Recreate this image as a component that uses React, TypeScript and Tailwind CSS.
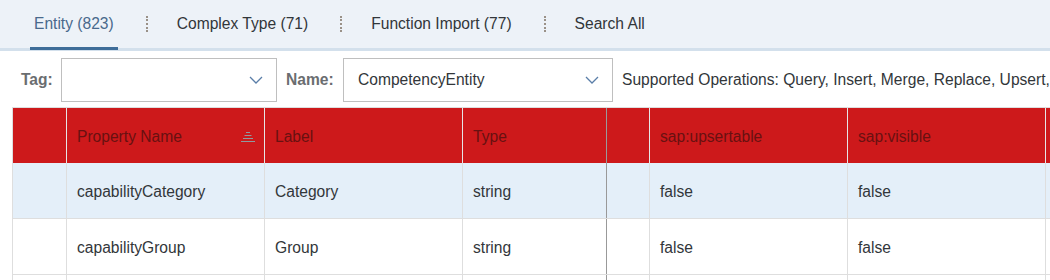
import React from "react";

const tabs = [
  { label: "Entity (823)", active: true },
  { label: "Complex Type (71)", active: false },
  { label: "Function Import (77)", active: false },
  { label: "Search All", active: false },
];

const columns = [
  { key: "sel", title: "", width: "w-[54px]" },
  { key: "name", title: "Property Name", width: "w-[198px]", sort: true },
  { key: "label", title: "Label", width: "w-[198px]" },
  { key: "type", title: "Type", width: "w-[144px]", dark: true },
  { key: "gap", title: "", width: "w-[43px]" },
  { key: "upsert", title: "sap:upsertable", width: "w-[198px]" },
  { key: "visible", title: "sap:visible", width: "w-[198px]" },
  { key: "more", title: "", width: "w-[120px]" },
];

const rows = [
  { sel: "", name: "capabilityCategory", label: "Category", type: "string", gap: "", upsert: "false", visible: "false", more: "" },
  { sel: "", name: "capabilityGroup", label: "Group", type: "string", gap: "", upsert: "false", visible: "false", more: "" },
  { sel: "", name: "", label: "", type: "", gap: "", upsert: "", visible: "", more: "" },
];

const Chevron = () => (
  <svg width="14" height="8" viewBox="0 0 14 8" className="shrink-0">
    <path d="M1 1 L7 7 L13 1" fill="none" stroke="#5a7ea8" strokeWidth="1.3" />
  </svg>
);

const SortIcon = () => (
  <svg width="16" height="12" viewBox="0 0 16 12">
    <rect x="6" y="1" width="4" height="1" fill="#8e9aa0" />
    <rect x="4.5" y="4" width="7" height="1" fill="#8e9aa0" />
    <rect x="3" y="7" width="10" height="1" fill="#8e9aa0" />
    <rect x="1" y="10" width="14" height="1" fill="#8e9aa0" />
  </svg>
);

const Select = ({ value, width }: { value: string; width: string }) => (
  <div className={`flex items-center justify-between h-[44px] ${width} shrink-0 border border-[#bfbfbf] bg-white pl-[14px] pr-[13px]`}>
    <span className="text-[15.6px] text-[#32363a]">{value}</span>
    <Chevron />
  </div>
);

const App = () => {
  return (
    <div className="w-[1050px] h-[280px] overflow-hidden bg-white" style={{ fontFamily: '"Liberation Sans", Arial, sans-serif' }}>
      {/* tab bar */}
      <div className="h-[51px] bg-[#edf2f8] border-b-[3px] border-[#d3e0ec] flex items-stretch pl-[30px]">
        {tabs.map((t, i) => (
          <div key={t.label} className="flex items-center">
            <div
              className={`h-full flex items-center px-[4px] -mb-[3px] border-b-[3px] ${
                t.active ? "border-[#3e6d99] text-[#49698c]" : "border-transparent text-[#32363a]"
              } text-[15.6px]`}
            >
              {t.label}
            </div>
            {i < tabs.length - 1 && (
              <div className="ml-[28px] mr-[25px] h-[16px] border-l-2 border-dotted border-[#9a9188]" />
            )}
          </div>
        ))}
      </div>

      {/* filter bar */}
      <div className="flex items-center h-[56px] pl-[21px] pt-[1px] whitespace-nowrap">
        <span className="w-[40px] shrink-0 text-[15.6px] font-bold text-[#6a6d70]">Tag:</span>
        <Select value="" width="w-[216px]" />
        <span className="ml-[9px] w-[57px] shrink-0 text-[15.6px] font-bold text-[#6a6d70]">Name:</span>
        <Select value="CompetencyEntity" width="w-[270px]" />
        <span className="text-[15.6px] text-[#32363a] ml-[9px]">
          Supported Operations: Query, Insert, Merge, Replace, Upsert,
        </span>
      </div>

      {/* table */}
      <div className="ml-[12px] border-l border-t border-[#dedede] w-max">
        <div className="flex h-[55px] bg-[#cd191b]">
          {columns.map((c) => (
            <div
              key={c.key}
              className={`${c.width} shrink-0 h-full border-r ${c.dark ? "border-[#9a9a9a]" : "border-[#e6e6e6]"} flex items-center justify-between pl-[10px] pr-[8px] pt-[2px] text-[15.6px] text-[#681111]`}
            >
              <span>{c.title}</span>
              {c.sort && <SortIcon />}
            </div>
          ))}
        </div>
        {rows.map((r, ri) => (
          <div key={ri} className={`flex h-[56px] border-b border-[#dedede] ${ri === 0 ? "bg-[#e4eff9]" : "bg-white"}`}>
            {columns.map((c) => (
              <div
                key={c.key}
                className={`${c.width} shrink-0 h-full border-r ${c.dark ? "border-[#999999]" : "border-[#dedede]"} flex items-center pl-[10px] pt-[2px] text-[15.6px] text-[#32363a]`}
              >
                {(r as Record<string, string>)[c.key]}
              </div>
            ))}
          </div>
        ))}
      </div>
    </div>
  );
};

export default App;
